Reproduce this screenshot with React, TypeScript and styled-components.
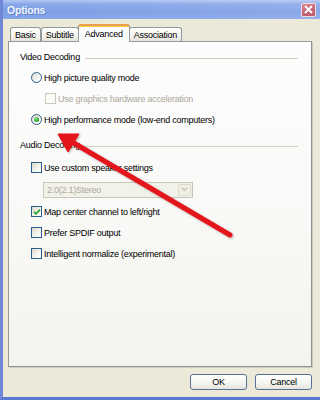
import React from 'react';
import styled, { createGlobalStyle, css } from 'styled-components';

const GlobalStyle = createGlobalStyle`
  html, body { margin: 0; padding: 0; background: #ece9d8; }
  body { font-family: "Liberation Sans", Arial, sans-serif; }
`;

const Window = styled.div`
  position: relative;
  width: 320px;
  height: 400px;
  box-sizing: border-box;
  display: flex;
  flex-direction: column;
  background: #ece9d8;
  border-left: 3px solid #6f87d6;
  border-bottom: 3px solid #5b78d2;
  overflow: hidden;
  font-family: "Liberation Sans", Arial, sans-serif;
  font-size: 9px;
  letter-spacing: -0.25px;
  color: #000;
`;

const TitleBar = styled.div`
  flex: none;
  height: 19px;
  display: flex;
  align-items: center;
  justify-content: space-between;
  padding: 0 4px 0 4px;
  background:
    linear-gradient(90deg, rgba(255,255,255,0) 0%, rgba(255,255,255,0.12) 100%),
    linear-gradient(180deg, #b2c7f3 0%, #88a7e9 22%, #7c9de5 60%, #86a5e9 100%);
`;

const Title = styled.span`
  font-weight: bold;
  font-size: 10.5px;
  letter-spacing: -0.2px;
  color: #eef3fd;
  text-shadow: 1px 1px 0 #6482c8;
`;

const CloseButton = styled.div`
  width: 15px;
  height: 14px;
  box-sizing: border-box;
  border: 1px solid #f2d9dd;
  border-radius: 2px;
  background: linear-gradient(160deg, #d98a98 0%, #c76476 55%, #b85a6c 100%);
  display: flex;
  align-items: center;
  justify-content: center;
`;

const Body = styled.div`
  flex: 1;
  display: flex;
  flex-direction: column;
  padding: 5px 8px 7px 5px;
  min-height: 0;
`;

const TabStrip = styled.div`
  flex: none;
  display: flex;
  align-items: flex-end;
  height: 18px;
  padding-left: 2px;
  margin-bottom: -1px;
`;

const Tab = styled.div<{ $active?: boolean }>`
  position: relative;
  box-sizing: border-box;
  display: flex;
  align-items: center;
  justify-content: center;
  padding: 0 4px;
  height: ${p => (p.$active ? 18 : 14)}px;
  margin-bottom: ${p => (p.$active ? 0 : 1)}px;
  border: 1px solid #919b9c;
  border-bottom: none;
  border-radius: 3px 3px 0 0;
  z-index: ${p => (p.$active ? 2 : 1)};
  background: linear-gradient(180deg, #ffffff 0%, #f3f2ec 65%, #e4e2d8 100%);
  ${p =>
    p.$active &&
    css`
      background: #fcfcfe;
      border-top: 2px solid #e8a04a;
      box-shadow: inset 0 1px 0 #ffc94a;
      padding: 0 6px;
      margin: 0 -1px;
    `}
`;

const Panel = styled.div`
  flex: 1;
  display: flex;
  flex-direction: column;
  box-sizing: border-box;
  border: 1px solid #919b9c;
  border-right-color: #8a9294;
  border-bottom-color: #8a9294;
  box-shadow: 1px 1px 0 #d0cdbf;
  background: linear-gradient(180deg, #fdfdfe 0%, #f9f9f7 50%, #f4f3ee 100%);
  padding: 8px 13px 0 11px;
`;

const GroupHeader = styled.div<{ $top: number }>`
  display: flex;
  align-items: center;
  gap: 5px;
  height: 14px;
  margin-top: ${p => p.$top}px;
  &::after {
    content: '';
    flex: 1;
    height: 1px;
    margin-top: 3px;
    background: #d0d0bf;
  }
`;

const OptionRow = styled.div<{ $indent: number; $h?: number; $top?: number }>`
  display: flex;
  align-items: center;
  gap: 2px;
  height: ${p => p.$h ?? 21}px;
  margin-top: ${p => p.$top ?? 0}px;
  padding-left: ${p => p.$indent}px;
  white-space: nowrap;
`;

const OptionText = styled.span<{ $disabled?: boolean }>`
  color: ${p => (p.$disabled ? '#aca899' : '#000')};
`;

const RadioMark = styled.span<{ $checked?: boolean }>`
  flex: none;
  width: 11px;
  height: 11px;
  box-sizing: border-box;
  border-radius: 50%;
  border: 1px solid #2a5c8c;
  background: linear-gradient(135deg, #dcd9c8 0%, #f4f4ef 55%, #ffffff 100%);
  display: flex;
  align-items: center;
  justify-content: center;
  &::after {
    content: '';
    width: 5px;
    height: 5px;
    border-radius: 50%;
    background: ${p =>
      p.$checked ? 'radial-gradient(circle at 35% 35%, #8ee28e 0%, #2aa52a 65%, #1c8a1c 100%)' : 'transparent'};
  }
`;

const CheckMark = styled.span<{ $disabled?: boolean }>`
  flex: none;
  width: 11px;
  height: 11px;
  box-sizing: border-box;
  border: 1px solid ${p => (p.$disabled ? '#cac8bb' : '#2a5c8c')};
  background: ${p =>
    p.$disabled ? '#fbfbf9' : 'linear-gradient(135deg, #dcd9c8 0%, #f4f4ef 55%, #ffffff 100%)'};
  display: flex;
  align-items: center;
  justify-content: center;
`;

const Select = styled.div`
  width: 150px;
  height: 16px;
  box-sizing: border-box;
  border: 1px solid #c9c7ba;
  background: #f3f2ea;
  display: flex;
  align-items: center;
  padding: 0 1px 0 3px;
`;

const SelectText = styled.span`
  flex: 1;
  color: #aca899;
`;

const SelectButton = styled.span`
  width: 13px;
  height: 12px;
  box-sizing: border-box;
  border: 1px solid #dcdacd;
  border-radius: 1px;
  background: #f1f0e7;
  display: flex;
  align-items: center;
  justify-content: center;
`;

const ButtonRow = styled.div`
  flex: none;
  display: flex;
  justify-content: flex-end;
  gap: 8px;
  margin-top: 7px;
`;

const DialogButton = styled.button`
  width: 57px;
  height: 16px;
  box-sizing: border-box;
  padding: 0;
  border: 1px solid #56709a;
  border-radius: 3px;
  background: linear-gradient(180deg, #ffffff 0%, #f5f5f1 55%, #e6e5dc 100%);
  font-family: inherit;
  font-size: 9px;
  letter-spacing: -0.25px;
  color: #000;
`;

const Annotation = styled.svg`
  position: absolute;
  left: -3px;
  top: 0;
  width: 320px;
  height: 400px;
  pointer-events: none;
  z-index: 5;
`;

const Radio = ({
  checked,
  label,
  indent,
  top,
}: {
  checked?: boolean;
  label: string;
  indent: number;
  top?: number;
}) => (
  <OptionRow $indent={indent} $top={top}>
    <RadioMark $checked={checked} />
    <OptionText>{label}</OptionText>
  </OptionRow>
);

const Check = ({
  checked,
  disabled,
  label,
  indent,
  top,
}: {
  checked?: boolean;
  disabled?: boolean;
  label: string;
  indent: number;
  top?: number;
}) => (
  <OptionRow $indent={indent} $top={top}>
    <CheckMark $disabled={disabled}>
      {checked && (
        <svg width="8" height="8" viewBox="0 0 8 8">
          <path d="M1 3.8 L3 5.8 L7 1.6" fill="none" stroke="#21a121" strokeWidth="1.6" />
        </svg>
      )}
    </CheckMark>
    <OptionText $disabled={disabled}>{label}</OptionText>
  </OptionRow>
);

export default function App() {
  return (
    <>
      <GlobalStyle />
      <Window>
        <TitleBar>
          <Title>Options</Title>
          <CloseButton>
            <svg width="9" height="9" viewBox="0 0 9 9">
              <path d="M1 1 L8 8 M8 1 L1 8" stroke="#ffffff" strokeWidth="1.8" />
            </svg>
          </CloseButton>
        </TitleBar>
        <Body>
          <TabStrip>
            <Tab>Basic</Tab>
            <Tab>Subtitle</Tab>
            <Tab $active>Advanced</Tab>
            <Tab>Association</Tab>
          </TabStrip>
          <Panel>
            <GroupHeader $top={0}>Video Decoding</GroupHeader>
            <Radio indent={11} top={3} label="High picture quality mode" />
            <Check indent={25} disabled label="Use graphics hardware acceleration" />
            <Radio indent={11} checked label="High performance mode (low-end computers)" />
            <GroupHeader $top={8}>Audio Decoding</GroupHeader>
            <Check indent={11} top={5} label="Use custom speaker settings" />
            <OptionRow $indent={23} $h={23}>
              <Select>
                <SelectText>2.0(2.1)Stereo</SelectText>
                <SelectButton>
                  <svg width="7" height="5" viewBox="0 0 7 5">
                    <path d="M0.8 0.8 L3.5 3.6 L6.2 0.8" fill="none" stroke="#c4c2b2" strokeWidth="1.4" />
                  </svg>
                </SelectButton>
              </Select>
            </OptionRow>
            <Check indent={11} checked label="Map center channel to left/right" />
            <Check indent={11} label="Prefer SPDIF output" />
            <Check indent={11} label="Intelligent normalize (experimental)" />
          </Panel>
          <ButtonRow>
            <DialogButton>OK</DialogButton>
            <DialogButton>Cancel</DialogButton>
          </ButtonRow>
        </Body>
        <Annotation viewBox="0 0 320 400">
          <defs>
            <filter id="arrowShadow" x="-10%" y="-10%" width="130%" height="130%">
              <feDropShadow dx="1" dy="1" stdDeviation="0.8" floodColor="#000" floodOpacity="0.3" />
            </filter>
          </defs>
          <g filter="url(#arrowShadow)" fill="#e3141b" stroke="#e3141b">
            <line x1="230" y1="235" x2="72" y2="142" strokeWidth="5" strokeLinecap="round" />
            <polygon points="58,134 79,134 68,152" strokeWidth="1" strokeLinejoin="round" />
          </g>
        </Annotation>
      </Window>
    </>
  );
}
